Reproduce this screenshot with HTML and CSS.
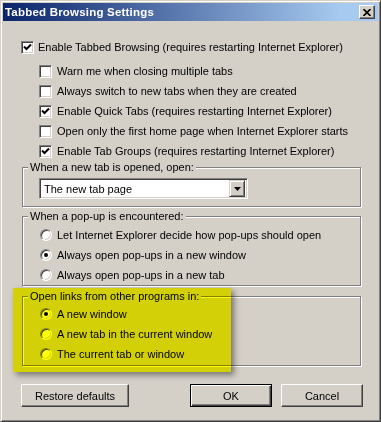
FILE: index.html
```html
<!DOCTYPE html>
<html lang="en">
<head>
<title>Tabbed Browsing Settings</title>
<meta charset="utf-8">
<link rel="stylesheet" href="styles.css">
</head>
<body>

<div class="window">
  <div class="titlebar">
    <span class="title">Tabbed Browsing Settings</span>
    <span class="close">
      <svg width="8" height="7" viewBox="0 0 8 7"><path d="M0.5 0 L7.5 7 M7.5 0 L0.5 7" stroke="#000" stroke-width="1.6" fill="none"/></svg>
    </span>
  </div>

  <div class="content">
    <div class="row main">
      <span class="box on"><svg width="9" height="9" viewBox="0 0 9 9"><path d="M1 3.5 L3.5 6 L8 1.5" stroke="#000" stroke-width="2" fill="none"/></svg></span>
      Enable Tabbed Browsing (requires restarting Internet Explorer)
    </div>
    <div class="sub">
      <div class="row"><span class="box"></span>Warn me when closing multiple tabs</div>
      <div class="row"><span class="box"></span>Always switch to new tabs when they are created</div>
      <div class="row"><span class="box on"><svg width="9" height="9" viewBox="0 0 9 9"><path d="M1 3.5 L3.5 6 L8 1.5" stroke="#000" stroke-width="2" fill="none"/></svg></span>Enable Quick Tabs (requires restarting Internet Explorer)</div>
      <div class="row"><span class="box"></span>Open only the first home page when Internet Explorer starts</div>
      <div class="row"><span class="box on"><svg width="9" height="9" viewBox="0 0 9 9"><path d="M1 3.5 L3.5 6 L8 1.5" stroke="#000" stroke-width="2" fill="none"/></svg></span>Enable Tab Groups (requires restarting Internet Explorer)</div>
    </div>

    <div class="group g-newtab">
      <div class="group_title">When a new tab is opened, open:</div>
      <div class="select">
        <span class="select_value">The new tab page</span>
        <span class="select_arrow"><svg width="7" height="4" viewBox="0 0 7 4"><path d="M0 0 H7 L3.5 4 Z" fill="#000"/></svg></span>
      </div>
    </div>

    <div class="group g-popup">
      <div class="group_title">When a pop-up is encountered:</div>
      <div class="radios">
        <div class="row radio_row"><span class="radio"></span>Let Internet Explorer decide how pop-ups should open</div>
        <div class="row radio_row"><span class="radio on"></span>Always open pop-ups in a new window</div>
        <div class="row radio_row"><span class="radio"></span>Always open pop-ups in a new tab</div>
      </div>
    </div>

    <div class="group g-links">
      <div class="group_title">Open links from other programs in:</div>
      <div class="radios">
        <div class="row radio_row"><span class="radio on"></span>A new window</div>
        <div class="row radio_row"><span class="radio"></span>A new tab in the current window</div>
        <div class="row radio_row"><span class="radio"></span>The current tab or window</div>
      </div>
    </div>

    <div class="buttons">
      <span class="btn btn_restore">Restore defaults</span>
      <span class="btn btn_ok">OK</span>
      <span class="btn">Cancel</span>
    </div>
  </div>

  <!-- marker over the "open links" group -->
  <div class="highlight"></div>
</div>

</body>
</html>
```

FILE: styles.css
```css
body {
  margin: 0;
  font-family: "Liberation Sans", Arial, sans-serif;
  font-size: 11px;
  color: #000;
  background: #d4d0c8;
}
.window {
  position: relative;
  box-sizing: border-box;
  width: 381px;
  height: 422px;
  background: #d4d0c8;
  border: 1px solid;
  border-color: #d4d0c8 #404040 #404040 #d4d0c8;
  box-shadow: inset 1px 1px 0 #fff, inset -1px -1px 0 #808080;
  padding: 2px;
}
.titlebar {
  display: flex;
  align-items: center;
  height: 18px;
  padding: 0 3px 0 2px;
  background: linear-gradient(to right, #0a246a, #a6caf0 90%);
}
.title {
  flex: 1;
  color: #fff;
  font-weight: bold;
  font-size: 11.5px;
  letter-spacing: 0.2px;
}
.close {
  box-sizing: border-box;
  width: 16px;
  height: 14px;
  display: flex;
  align-items: center;
  justify-content: center;
  background: #d4d0c8;
  border: 1px solid;
  border-color: #fff #404040 #404040 #fff;
  box-shadow: inset -1px -1px 0 #808080;
}
.content {
  padding: 16px 17px 0 18px;
}
.row {
  display: flex;
  align-items: center;
  height: 20px;
  white-space: nowrap;
}
.sub {
  margin-top: 4px;
  padding-left: 18px;
}
.box {
  box-sizing: border-box;
  width: 13px;
  height: 13px;
  margin-right: 4px;
  flex: none;
  display: flex;
  align-items: center;
  justify-content: center;
  background: #fff;
  border: 1px solid;
  border-color: #808080 #fff #fff #808080;
  box-shadow: inset 1px 1px 0 #404040, inset -1px -1px 0 #d4d0c8;
}
.sub .box {
  margin-right: 5px;
}
.group {
  margin-left: 1px;
  border: 1px solid #808080;
  box-shadow: 1px 1px 0 #fff, inset 1px 1px 0 #fff;
  padding: 0 0 0 16px;
}
.group_title {
  width: max-content;
  margin: -8px 0 0 -11px;
  padding: 0 2px;
  line-height: 14px;
  background: #d4d0c8;
}
.g-newtab {
  margin-top: 6px;
  padding-bottom: 7px;
}
.g-popup {
  margin-top: 9px;
  padding-bottom: 1px;
}
.g-links {
  margin-top: 10px;
  padding-bottom: 2px;
}
.select {
  box-sizing: border-box;
  display: flex;
  align-items: center;
  width: 209px;
  height: 21px;
  margin-top: 4px;
  background: #fff;
  border: 1px solid;
  border-color: #808080 #fff #fff #808080;
  box-shadow: inset 1px 1px 0 #404040, inset -1px -1px 0 #d4d0c8;
  padding: 2px;
}
.select_value {
  flex: 1;
  padding-left: 2px;
}
.select_arrow {
  box-sizing: border-box;
  width: 16px;
  height: 17px;
  display: flex;
  align-items: center;
  justify-content: center;
  background: #d4d0c8;
  border: 1px solid;
  border-color: #d4d0c8 #404040 #404040 #d4d0c8;
  box-shadow: inset 1px 1px 0 #fff, inset -1px -1px 0 #808080;
}
.radios {
  display: flex;
  flex-direction: column;
  gap: 2px;
}
.g-popup .radios {
  margin-top: 3px;
}
.g-links .radios {
  margin-top: 2px;
}
.radio_row {
  height: 18px;
}
.radio {
  box-sizing: border-box;
  width: 12px;
  height: 12px;
  margin: 0 5px 0 1px;
  flex: none;
  display: flex;
  align-items: center;
  justify-content: center;
  border-radius: 50%;
  background: #fff;
  border: 1px solid;
  border-color: #808080 #fff #fff #808080;
  box-shadow: inset 1px 1px 0 #404040, inset -1px -1px 0 #d4d0c8;
}
.radio.on::after {
  content: "";
  width: 4px;
  height: 4px;
  border-radius: 50%;
  background: #000;
}
.buttons {
  display: flex;
  gap: 9px;
  margin: 18px -2px 0 0;
}
.btn {
  box-sizing: border-box;
  display: flex;
  align-items: center;
  justify-content: center;
  width: 82px;
  height: 23px;
  background: #d4d0c8;
  border: 1px solid;
  border-color: #fff #404040 #404040 #fff;
  box-shadow: inset -1px -1px 0 #808080;
}
.btn_restore {
  width: 108px;
  margin-right: auto;
}
.btn_ok {
  border-color: #000;
  box-shadow: inset 1px 1px 0 #fff, inset -1px -1px 0 #404040, inset -2px -2px 0 #808080;
}
.highlight {
  position: absolute;
  left: 12px;
  top: 287px;
  width: 218px;
  height: 84px;
  background: #ffff08;
  mix-blend-mode: multiply;
  box-shadow: 3px 3px 6px rgba(0, 0, 0, 0.45);
}
```
